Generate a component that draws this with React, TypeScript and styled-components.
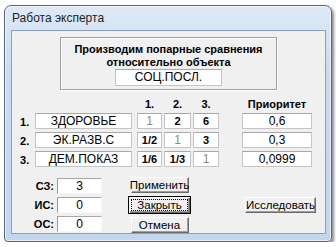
import React from 'react';
import styled, { createGlobalStyle } from 'styled-components';

const GlobalStyle = createGlobalStyle`
  html, body {
    margin: 0;
    padding: 0;
    background: #ffffff;
  }
  body {
    font-family: "Liberation Sans", Arial, sans-serif;
    color: #000;
  }
`;

const names = ['ЗДОРОВЬЕ', 'ЭК.РАЗВ.С', 'ДЕМ.ПОКАЗ'];
const matrix = [
  ['1', '2', '6'],
  ['1/2', '1', '3'],
  ['1/6', '1/3', '1'],
];
const priorities = ['0,6', '0,3', '0,0999'];
const colWidths = [25, 27, 26];

function App() {
  return (
    <>
      <GlobalStyle />
      <Window>
        <TitleBar>Работа эксперта</TitleBar>
        <Client>
          <GroupBox>
            <GroupTitle>
              Производим попарные сравнения
              <br />
              относительно объекта
            </GroupTitle>
            <ObjectField>СОЦ.ПОСЛ.</ObjectField>
          </GroupBox>

          <Table>
            <span />
            <span />
            {colWidths.map((w, i) => (
              <HeadCell key={i} $w={w}>
                {i + 1}.
              </HeadCell>
            ))}
            <HeadCell $w={70}>Приоритет</HeadCell>

            {names.map((name, r) => (
              <React.Fragment key={name}>
                <RowLabel>{r + 1}.</RowLabel>
                <Field $w={97}>{name}</Field>
                {matrix[r].map((v, c) => (
                  <Field key={c} $w={colWidths[c]} $bold={r !== c} $muted={r === c}>
                    {v}
                  </Field>
                ))}
                <Field $w={70}>{priorities[r]}</Field>
              </React.Fragment>
            ))}
          </Table>

          <Bottom>
            <Scores>
              <ScoreLabel>СЗ:</ScoreLabel>
              <ScoreField>3</ScoreField>
              <ScoreLabel>ИС:</ScoreLabel>
              <ScoreField>0</ScoreField>
              <ScoreLabel>ОС:</ScoreLabel>
              <ScoreField>0</ScoreField>
            </Scores>
            <Buttons>
              <Button>Применить</Button>
              <Button $default>
                <Focus>Закрыть</Focus>
              </Button>
              <Button>Отмена</Button>
            </Buttons>
            <Button $w={71}>Исследовать</Button>
          </Bottom>
        </Client>
      </Window>
    </>
  );
}

export default App;

const Window = styled.div`
  margin: 5px 0 0 4px;
  width: 328px;
  height: 237px;
  box-sizing: border-box;
  border: 1px solid #55687f;
  border-radius: 7px 7px 4px 4px;
  background: linear-gradient(180deg, #dde9f7 0%, #c9dbf0 30%, #c2d6ee 100%);
  box-shadow: 2px 2px 3px rgba(0, 0, 0, 0.45), inset 0 0 0 1px rgba(255, 255, 255, 0.6);
  display: flex;
  flex-direction: column;
  padding: 0 5px 7px 6px;
`;

const TitleBar = styled.div`
  height: 26px;
  display: flex;
  align-items: center;
  padding-left: 1px;
  font-size: 12px;
  color: #1e1e1e;
`;

const Client = styled.div`
  flex: 1;
  background: #f0f0f0;
  border: 1px solid #8aa0bd;
  display: flex;
  flex-direction: column;
`;

const GroupBox = styled.div`
  margin: 6px auto 0;
  width: 217px;
  height: 53px;
  box-sizing: border-box;
  border: 1px solid #a0a0a0;
  box-shadow: inset 1px 1px 0 #ffffff, 1px 1px 0 #ffffff;
  display: flex;
  flex-direction: column;
  align-items: center;
  padding-top: 5px;
`;

const GroupTitle = styled.div`
  font-size: 11px;
  font-weight: bold;
  line-height: 13px;
  text-align: center;
`;

const ObjectField = styled.div`
  width: 107px;
  height: 17px;
  box-sizing: border-box;
  background: #fff;
  border: 1px solid #c4c4c4;
  border-top-color: #a8a8a8;
  font-size: 12px;
  line-height: 15px;
  text-align: center;
`;

const Table = styled.div`
  margin-top: 6px;
  padding-left: 8px;
  display: grid;
  grid-template-columns: 15px 102px 27px 29px 49px 70px;
  grid-template-rows: 14px repeat(3, 16px);
  row-gap: 3px;
  align-items: center;
`;

const HeadCell = styled.div<{ $w: number }>`
  width: ${(p) => p.$w}px;
  align-self: end;
  font-size: 11px;
  font-weight: bold;
  line-height: 12px;
  text-align: center;
`;

const RowLabel = styled.div`
  font-size: 11px;
  font-weight: bold;
  padding-top: 2px;
`;

const Field = styled.div<{ $w: number; $bold?: boolean; $muted?: boolean }>`
  width: ${(p) => p.$w}px;
  height: 16px;
  box-sizing: border-box;
  background: #fff;
  border: 1px solid #c4c4c4;
  border-top-color: #a8a8a8;
  font-size: ${(p) => (p.$bold ? '11px' : '12px')};
  font-weight: ${(p) => (p.$bold ? 'bold' : 'normal')};
  color: ${(p) => (p.$muted ? '#8a8a8a' : '#000')};
  line-height: 14px;
  text-align: center;
`;

const Bottom = styled.div`
  margin-top: 10px;
  padding-left: 12px;
  display: flex;
  align-items: center;
`;

const Scores = styled.div`
  display: grid;
  grid-template-columns: 30px 45px;
  column-gap: 3px;
  row-gap: 3px;
  grid-auto-rows: 16px;
  align-items: center;
`;

const ScoreLabel = styled.div`
  font-size: 11px;
  font-weight: bold;
  text-align: right;
`;

const ScoreField = styled.div`
  height: 16px;
  box-sizing: border-box;
  background: #fff;
  border-left: 1px solid #9a9a9a;
  border-top: 1px solid #a8a8a8;
  border-right: 1px solid #f8f8f8;
  border-bottom: 1px solid #f8f8f8;
  font-size: 12px;
  line-height: 15px;
  text-align: center;
`;

const Buttons = styled.div`
  margin-left: 26px;
  margin-right: 54px;
  width: 63px;
  display: flex;
  flex-direction: column;
  align-items: center;
  gap: 3px;
`;

const Button = styled.div<{ $default?: boolean; $w?: number }>`
  width: ${(p) => (p.$w ? p.$w : p.$default ? 63 : 58)}px;
  height: ${(p) => (p.$default ? 18 : 16)}px;
  box-sizing: border-box;
  background: #f0f0f0;
  border: 1px solid;
  border-color: #ffffff #6a6a6a #6a6a6a #ffffff;
  box-shadow: inset -1px -1px 0 #a0a0a0;
  ${(p) =>
    p.$default
      ? 'border: 1px solid #000; box-shadow: inset 1px 1px 0 #fff, inset -1px -1px 0 #6a6a6a, inset -2px -2px 0 #a0a0a0; padding: 2px;'
      : ''}
  font-size: 11.5px;
  line-height: 14px;
  text-align: center;
  display: flex;
  align-items: center;
  justify-content: center;
  white-space: nowrap;
`;

const Focus = styled.span`
  flex: 1;
  align-self: stretch;
  border: 1px dotted #000;
  line-height: 11px;
`;
